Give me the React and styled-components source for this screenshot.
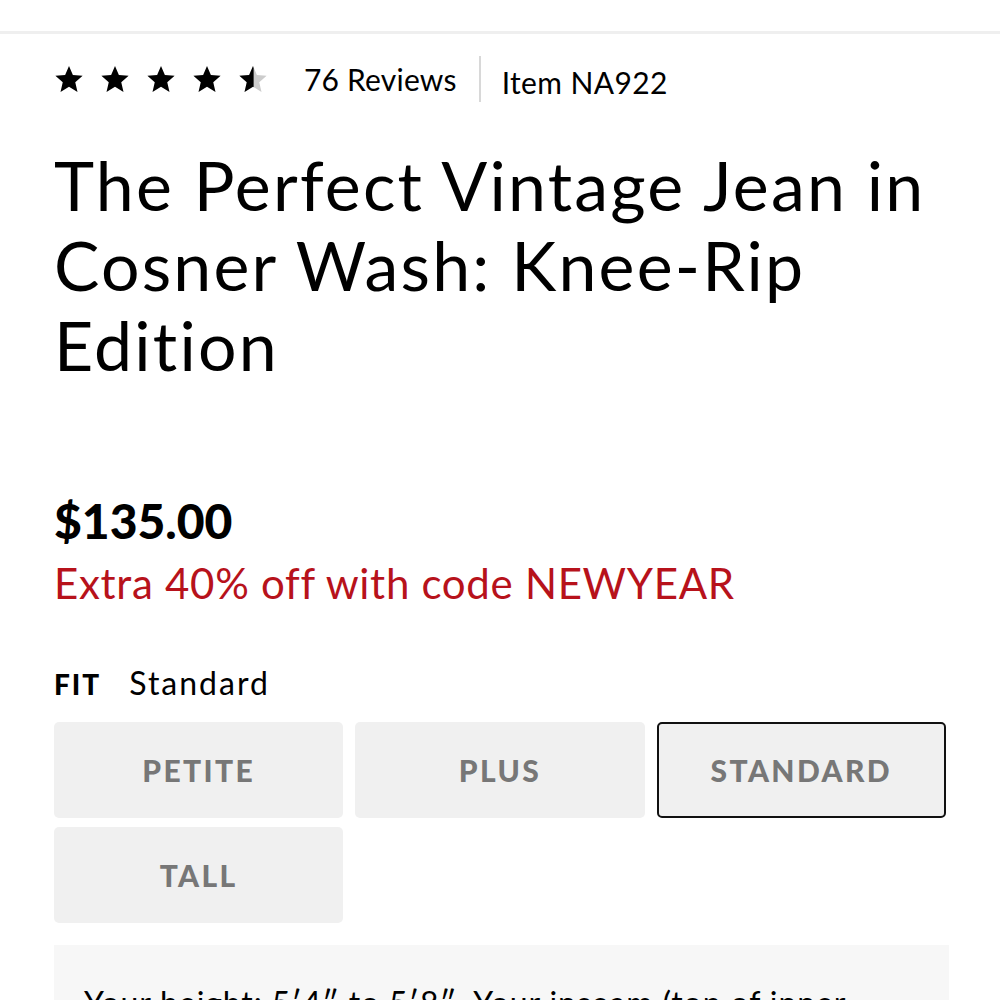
import React from "react";
import styled, { createGlobalStyle } from "styled-components";

const GlobalStyle = createGlobalStyle`
  html, body {
    margin: 0;
    padding: 0;
    background: #fff;
  }
  body {
    font-family: Lato, "Noto Sans", sans-serif;
    color: #000;
  }
`;

const Page = styled.div`
  width: 1000px;
  overflow: hidden;
`;

const TopBar = styled.div`
  height: 31px;
  border-bottom: 3px solid #efefef;
`;

const Content = styled.div`
  padding: 0 52px 0 54px;
`;

const RatingRow = styled.div`
  display: flex;
  align-items: center;
  height: 46px;
  margin-top: 22px;
`;

const Stars = styled.div`
  display: flex;
  gap: 16px;
  margin-right: 36px;
`;

const Reviews = styled.span`
  font-size: 30px;
  letter-spacing: 0.2px;
  padding-right: 22px;
  border-right: 2px solid #d8d8d8;
  line-height: 46px;
`;

const Item = styled.span`
  font-size: 30px;
  letter-spacing: 0.4px;
  padding-left: 21px;
  padding-top: 6px;
`;

const Title = styled.h1`
  margin: 43px 0 0;
  font-weight: 400;
  font-size: 68px;
  line-height: 80px;
  letter-spacing: 2.2px;
  max-width: 900px;
`;

const Price = styled.div`
  margin-top: 105px;
  font-weight: 900;
  font-size: 48px;
  line-height: 62px;
`;

const Promo = styled.div`
  color: #b7121b;
  font-size: 42px;
  line-height: 62px;
  letter-spacing: 0.7px;
`;

const FitLabel = styled.div`
  margin-top: 49px;
  font-size: 32px;
  display: flex;
  gap: 28px;
  align-items: baseline;
  letter-spacing: 2px;
`;

const FitKey = styled.span`
  font-weight: 900;
  font-size: 28px;
  letter-spacing: 2px;
`;

const Options = styled.div`
  margin-top: 20px;
  display: grid;
  grid-template-columns: repeat(3, 1fr);
  column-gap: 12px;
  row-gap: 9px;
  width: 892px;
`;

const Option = styled.button`
  height: 96px;
  border-radius: 5px;
  background: #f0f0f0;
  border: 2.5px solid ${(p) => (p.$active ? "#111" : "transparent")};
  color: #777;
  font-family: Lato, "Noto Sans", sans-serif;
  font-weight: 900;
  font-size: 30px;
  letter-spacing: 2.4px;
  cursor: pointer;
`;

const Info = styled.div`
  margin-top: 22px;
  width: 895px;
  background: #f7f7f7;
  padding: 36px 30px 40px;
  box-sizing: border-box;
  font-size: 32px;
  line-height: 44px;
  letter-spacing: 0.9px;
`;

function Star({ half }) {
  const d =
    "M12 1.5l3.1 7.2 7.8.7-5.9 5.2 1.8 7.7L12 18.2l-6.8 4.1 1.8-7.7-5.9-5.2 7.8-.7z";
  return (
    <svg width="30" height="30" viewBox="0 0 24 24">
      <defs>
        <clipPath id="half">
          <rect x="0" y="0" width="12.5" height="24" />
        </clipPath>
      </defs>
      {half ? (
        <>
          <path d={d} fill="#ccc" />
          <path d={d} fill="#000" clipPath="url(#half)" />
        </>
      ) : (
        <path d={d} fill="#000" />
      )}
    </svg>
  );
}

const fits = ["PETITE", "PLUS", "STANDARD", "TALL"];

export default function App() {
  return (
    <Page>
      <GlobalStyle />
      <TopBar />
      <Content>
        <RatingRow>
          <Stars>
            <Star />
            <Star />
            <Star />
            <Star />
            <Star half />
          </Stars>
          <Reviews>76 Reviews</Reviews>
          <Item>Item NA922</Item>
        </RatingRow>
        <Title>The Perfect Vintage Jean in Cosner Wash: Knee-Rip Edition</Title>
        <Price>$135.00</Price>
        <Promo>Extra 40% off with code NEWYEAR</Promo>
        <FitLabel>
          <FitKey>FIT</FitKey>
          <span>Standard</span>
        </FitLabel>
        <Options>
          {fits.map((f) => (
            <Option key={f} $active={f === "STANDARD"}>
              {f}
            </Option>
          ))}
        </Options>
        <Info>
          Your height: 5′4″ to 5′8″. Your inseam (top of inner thigh to ankle
          bone): 27″ to 29″.
        </Info>
      </Content>
    </Page>
  );
}
